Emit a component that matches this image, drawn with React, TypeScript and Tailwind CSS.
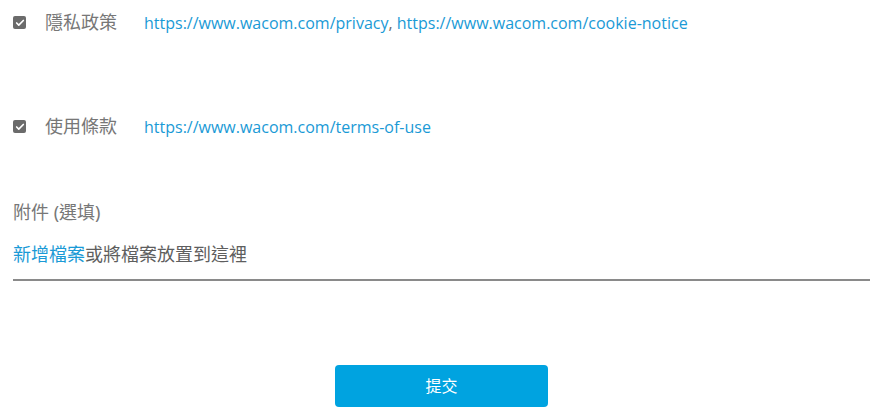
import { Check } from 'lucide-react'

const cjk = "font-['Noto_Sans','Noto_Sans_CJK_TC',sans-serif]"
const latin = "font-['Open_Sans','Noto_Sans_CJK_TC',sans-serif]"

function Box() {
  return (
    <span className="flex h-[13px] w-[13px] shrink-0 items-center justify-center rounded-[2px] bg-[#6b6b6b]">
      <Check size={10} strokeWidth={4} color="#fff" />
    </span>
  )
}

function Agree({ label, children }: { label: string; children: React.ReactNode }) {
  return (
    <div className="flex items-center">
      <Box />
      <span className={`ml-[19px] w-[99px] text-[18px] text-[#777] ${cjk}`}>{label}</span>
      <span className={`text-[16px] text-[#6b6b6b] ${latin}`}>{children}</span>
    </div>
  )
}

export default function App() {
  return (
    <div className="h-[410px] w-[886px] overflow-hidden bg-white px-[13px]">
      <div className="pt-[9px]">
        <Agree label="隱私政策">
          <span className="text-[#1a9ad6]">https://www.wacom.com/privacy</span>,{' '}
          <span className="text-[#1a9ad6]">https://www.wacom.com/cookie-notice</span>
        </Agree>
      </div>
      <div className="mt-[77px]">
        <Agree label="使用條款">
          <span className="text-[#1a9ad6]">https://www.wacom.com/terms-of-use</span>
        </Agree>
      </div>

      <div className={`mt-[59px] text-[18px] text-[#777] ${cjk}`}>附件 (選填)</div>
      <div className={`mt-[15px] mr-[3px] border-b-2 border-[#8a8a8a] pb-[11px] text-[18px] text-[#5e5e5e] ${cjk}`}>
        <span className="text-[#1a9ad6]">新增檔案</span>或將檔案放置到這裡
      </div>

      <div className="mt-[84px] mr-[3px] flex justify-center">
        <button className={`h-[42px] w-[213px] rounded-[4px] bg-[#00a3e0] text-[16px] text-white ${cjk}`}>
          提交
        </button>
      </div>
    </div>
  )
}
